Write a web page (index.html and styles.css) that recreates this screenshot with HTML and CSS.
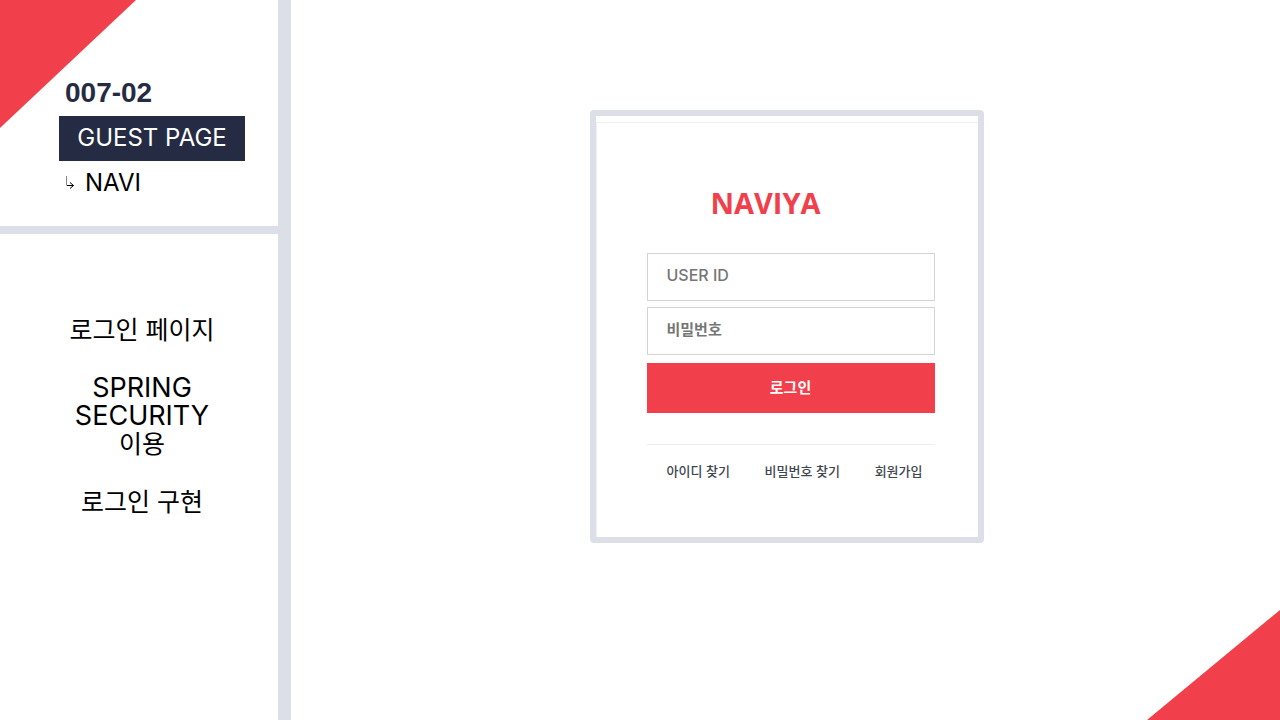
FILE: index.html
```html
<!DOCTYPE html>
<html lang="ko">
<head>
<meta charset="utf-8">
<meta name="viewport" content="width=device-width, initial-scale=1">
<title>NAVIYA - Guest Page</title>
<link rel="stylesheet" href="styles.css">
</head>
<body>
<div class="slide">
  <svg class="corner corner-top" viewBox="0 0 136 128" aria-hidden="true"><path d="M0 0H136L0 128Z"/></svg>
  <svg class="corner corner-bottom" viewBox="0 0 133 110" aria-hidden="true"><path d="M133 0V110H0Z"/></svg>
  <aside class="sidebar">
    <header class="section">
      <p class="number">007-02</p>
      <h1 class="title">GUEST PAGE</h1>
      <p class="subtitle">
        <svg class="arrow" viewBox="0 0 10 14" aria-hidden="true"><path class="stem" d="M1.500 0V9.500"/><path d="M2 9.500H8.500M5 6.500L8.500 9.500L5 12.500"/></svg>
        <span>NAVI</span>
      </p>
    </header>
    <div class="notes">
      <p class="note">로그인 페이지</p>
      <div class="note">
        <p class="latin">SPRING</p>
        <p class="latin">SECURITY</p>
        <p>이용</p>
      </div>
      <p class="note">로그인 구현</p>
    </div>
  </aside>
  <main class="stage">
    <section class="card">
      <div class="panel">
        <h2 class="brand">NAVIYA</h2>
        <form class="login">
          <input class="field" type="text" placeholder="USER ID" aria-label="USER ID">
          <input class="field" type="password" placeholder="비밀번호" aria-label="비밀번호">
          <button class="submit" type="button">로그인</button>
        </form>
        <nav class="links">
          <a href="#">아이디 찾기</a>
          <a href="#">비밀번호 찾기</a>
          <a href="#">회원가입</a>
        </nav>
      </div>
    </section>
  </main>
</div>
</body>
</html>
```
FILE: styles.css
```css
* {
  box-sizing: border-box;
}

body,
h1,
h2,
p {
  margin: 0;
}

body {
  background: #fff;
  color: #000;
  font-family: Inter, "Noto Sans CJK KR", sans-serif;
}

.slide {
  position: relative;
  display: flex;
  min-height: 100vh;
}

.corner {
  position: absolute;
  fill: #f1404b;
}

.corner-top {
  top: 0;
  left: 0;
  width: 136px;
}

.corner-bottom {
  right: 0;
  bottom: 0;
  width: 133px;
}

.sidebar {
  flex: 0 0 291px;
  border-right: 13px solid #dcdfe7;
}

.section {
  position: relative;
  padding: 77px 33px 28px 59px;
  border-bottom: 8px solid #dcdfe7;
}

.number {
  padding-left: 6px;
  color: #252b42;
  font: bold 28px/32px "Liberation Sans", sans-serif;
}

.title {
  margin-top: 7px;
  background: #252b42;
  color: #fff;
  font: 400 24px/44px Inter, sans-serif;
  padding-bottom: 1px;
  text-align: center;
}

.subtitle {
  display: flex;
  align-items: center;
  gap: 10px;
  margin-top: 7px;
  padding-left: 6px;
  font: 400 24px/30px Inter, sans-serif;
}

.arrow {
  width: 10px;
  height: 14px;
  fill: none;
  stroke: #000;
}

.arrow .stem {
  stroke: #888;
}

.notes {
  display: grid;
  gap: 30px;
  padding: 82px 0 30px 6px;
  text-align: center;
}

.note {
  font: 400 25px/28px Inter, "Noto Sans CJK KR", sans-serif;
}

.latin {
  font-size: 27px;
}

.stage {
  flex: 1;
  display: flex;
  justify-content: center;
  align-items: flex-start;
  padding: 110px 0 110px 2px;
}

.card {
  width: 394px;
  padding-top: 6px;
  border: 6px solid #dcdfe7;
  border-radius: 4px;
}

.panel {
  padding: 60px 43px 56px 50px;
  border-top: 1px solid #f0f1f6;
  border-left: 1px solid #f0f1f6;
}

.brand {
  padding-right: 50px;
  color: #f1404b;
  font: 700 29px/40px "Open Sans", sans-serif;
  text-align: center;
}

.login {
  display: grid;
  gap: 6px;
  margin-top: 30px;
}

.field {
  width: 100%;
  height: 48px;
  padding: 0 19px 4px;
  border: 1px solid #d4d4d4;
  background: #fff;
  font: 500 16px/20px Inter, "Noto Sans CJK KR", sans-serif;
}

.field::placeholder {
  color: #757575;
  opacity: 1;
}

.field[type="password"] {
  font-size: 15px;
  font-weight: 700;
}

.submit {
  height: 50px;
  margin-top: 2px;
  padding: 0;
  border: 0;
  background: #f1404b;
  color: #fff;
  font: 700 15px/20px Inter, "Noto Sans CJK KR", sans-serif;
}

.links {
  display: flex;
  justify-content: space-between;
  margin-top: 31px;
  padding: 16px 12px 0 20px;
  border-top: 1px solid #eee;
}

.links a {
  color: #3f4650;
  font: 500 13px/20px "Noto Sans CJK KR", sans-serif;
  text-decoration: none;
}
```
